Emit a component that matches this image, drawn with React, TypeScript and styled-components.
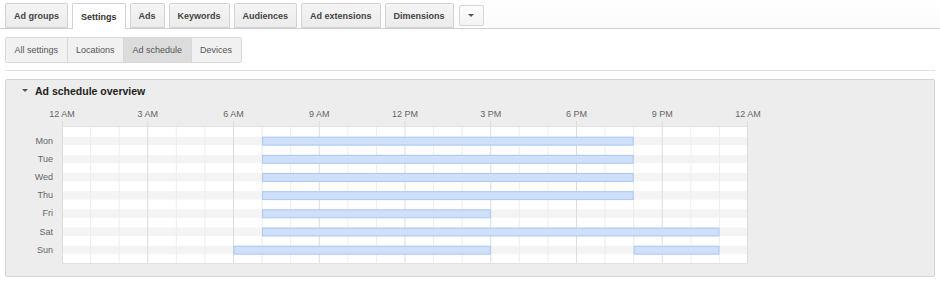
import styled, { createGlobalStyle } from "styled-components";

const GlobalStyle = createGlobalStyle`
  html, body {
    margin: 0;
    padding: 0;
    background: #fff;
    font-family: "Liberation Sans", Arial, sans-serif;
  }
`;

const HOUR_W = 686 / 24;
const ROW_STEP = 18.17;
const STRIPE_TOP = 10.7;
const STRIPE_H = 8.4;
const TICK_H = 5;
const BODY_H = 138;

const tabs = ["Ad groups", "Settings", "Ads", "Keywords", "Audiences", "Ad extensions", "Dimensions"];
const subTabs = ["All settings", "Locations", "Ad schedule", "Devices"];
const hours = ["12 AM", "3 AM", "6 AM", "9 AM", "12 PM", "3 PM", "6 PM", "9 PM", "12 AM"];

// [start hour, end hour] per day
const schedule: { day: string; slots: [number, number][] }[] = [
  { day: "Mon", slots: [[7, 20]] },
  { day: "Tue", slots: [[7, 20]] },
  { day: "Wed", slots: [[7, 20]] },
  { day: "Thu", slots: [[7, 20]] },
  { day: "Fri", slots: [[7, 15]] },
  { day: "Sat", slots: [[7, 23]] },
  { day: "Sun", slots: [[6, 15], [20, 23]] },
];

const ScheduleChart = () => {
  const w = 686;
  const h = TICK_H + BODY_H;
  const lines = Array.from({ length: 25 }, (_, i) => i);
  return (
    <svg width={w} height={h} viewBox={`0 0 ${w} ${h}`} style={{ display: "block" }}>
      <rect x={0} y={TICK_H} width={w} height={BODY_H} fill="#fff" />
      {schedule.map((_, i) => (
        <rect
          key={i}
          x={0}
          y={TICK_H + STRIPE_TOP + i * ROW_STEP}
          width={w}
          height={STRIPE_H}
          fill="#f4f4f4"
        />
      ))}
      {lines.map((i) => {
        const x = Math.min(Math.max(i * HOUR_W, 0.5), w - 0.5);
        const major = i % 3 === 0;
        return (
          <line
            key={i}
            x1={x}
            x2={x}
            y1={major ? 0 : TICK_H}
            y2={TICK_H + BODY_H}
            stroke={major ? "#dcdcdc" : "#ededed"}
            strokeWidth={1}
          />
        );
      })}
      <line x1={0} x2={w} y1={TICK_H + 0.5} y2={TICK_H + 0.5} stroke="#e2e2e2" />
      <line x1={0} x2={w} y1={TICK_H + BODY_H - 0.5} y2={TICK_H + BODY_H - 0.5} stroke="#e2e2e2" />
      {schedule.map((d, i) =>
        d.slots.map(([s, e], j) => (
          <rect
            key={`${i}-${j}`}
            x={s * HOUR_W + 0.5}
            y={TICK_H + STRIPE_TOP + i * ROW_STEP + 0.5}
            width={(e - s) * HOUR_W - 1}
            height={STRIPE_H - 0.5}
            fill="#cfe0fa"
            stroke="#a9c6f4"
            strokeWidth={1}
          />
        ))
      )}
    </svg>
  );
};

const App = () => {
  return (
    <>
      <GlobalStyle />
      <Page>
        <TabBar>
          {tabs.map((t) => (
            <Tab key={t} $active={t === "Settings"}>
              {t}
            </Tab>
          ))}
          <MoreButton>
            <DownArrow />
          </MoreButton>
        </TabBar>

        <Content>
          <SubTabs>
            {subTabs.map((t) => (
              <SubTab key={t} $active={t === "Ad schedule"}>
                {t}
              </SubTab>
            ))}
          </SubTabs>

          <Separator />

          <Panel>
            <PanelHeader>
              <DownArrow />
              <PanelTitle>Ad schedule overview</PanelTitle>
            </PanelHeader>

            <ChartArea>
              <span />
              <HourAxis>
                {hours.map((h, i) => (
                  <HourLabel key={i}>
                    <span>{h}</span>
                  </HourLabel>
                ))}
              </HourAxis>
              <DayColumn>
                {schedule.map((d) => (
                  <DayLabel key={d.day}>{d.day}</DayLabel>
                ))}
              </DayColumn>
              <ScheduleChart />
            </ChartArea>
          </Panel>
        </Content>
      </Page>
    </>
  );
};

export default App;

const Page = styled.div`
  width: 940px;
  height: 283px;
  overflow: hidden;
`;

const TabBar = styled.div`
  display: flex;
  align-items: flex-end;
  gap: 4px;
  height: 28px;
  padding-left: 5px;
  border-bottom: 1px solid #cfcfcf;
  background: linear-gradient(#fff, #fbfbfb);
`;

const Tab = styled.div<{ $active?: boolean }>`
  height: ${({ $active }) => ($active ? "25px" : "23px")};
  margin-bottom: ${({ $active }) => ($active ? "-1px" : "0")};
  padding: 0 8px;
  display: flex;
  align-items: center;
  font-size: 9px;
  font-weight: bold;
  color: ${({ $active }) => ($active ? "#333" : "#444")};
  border: 1px solid #d3d3d3;
  border-bottom: ${({ $active }) => ($active ? "none" : "1px solid #d3d3d3")};
  border-radius: 2px 2px 0 0;
  background: ${({ $active }) =>
    $active ? "#fff" : "linear-gradient(#f5f5f5, #ebebeb)"};
  white-space: nowrap;
`;

const MoreButton = styled.div`
  align-self: flex-start;
  margin-top: 5px;
  margin-left: 1px;
  width: 23px;
  height: 19px;
  display: flex;
  align-items: center;
  justify-content: center;
  border: 1px solid #d6d6d6;
  border-radius: 2px;
  background: linear-gradient(#fdfdfd, #f3f3f3);
`;

const DownArrow = styled.span`
  width: 0;
  height: 0;
  border-left: 3px solid transparent;
  border-right: 3px solid transparent;
  border-top: 3px solid #555;
`;

const Content = styled.div`
  padding: 8px 5px 0 5px;
`;

const SubTabs = styled.div`
  display: inline-flex;
  height: 26px;
  border: 1px solid #d8d8d8;
  border-radius: 2px;
  overflow: hidden;
  box-sizing: border-box;
`;

const SubTab = styled.div<{ $active?: boolean }>`
  display: flex;
  align-items: center;
  padding: 0 8.5px;
  font-size: 9px;
  color: #555;
  background: ${({ $active }) => ($active ? "#dcdcdc" : "#f1f1f1")};
  & + & {
    border-left: 1px solid #d8d8d8;
  }
`;

const Separator = styled.div`
  height: 1px;
  margin-top: 7px;
  background: #e3e3e3;
`;

const Panel = styled.div`
  margin-top: 8px;
  height: 198px;
  box-sizing: border-box;
  border: 1px solid #d3d3d3;
  border-radius: 2px;
  background: #ededed;
  padding: 4px 0 0 0;
`;

const PanelHeader = styled.div`
  display: flex;
  align-items: center;
  gap: 7px;
  height: 13px;
  padding-left: 16px;
`;

const PanelTitle = styled.span`
  font-size: 10.5px;
  font-weight: bold;
  color: #222;
`;

const ChartArea = styled.div`
  display: grid;
  grid-template-columns: 56px 686px;
  grid-template-rows: 13px auto;
  margin-top: 11px;
`;

const HourAxis = styled.div`
  display: flex;
  justify-content: space-between;
`;

const HourLabel = styled.div`
  width: 0;
  display: flex;
  justify-content: center;
  font-size: 9px;
  line-height: 13px;
  color: #666;
  white-space: nowrap;
`;

const DayColumn = styled.div`
  display: flex;
  flex-direction: column;
  padding-top: 10.8px;
  padding-right: 9px;
`;

const DayLabel = styled.div`
  height: ${ROW_STEP}px;
  line-height: ${ROW_STEP}px;
  text-align: right;
  font-size: 9px;
  color: #666;
`;
